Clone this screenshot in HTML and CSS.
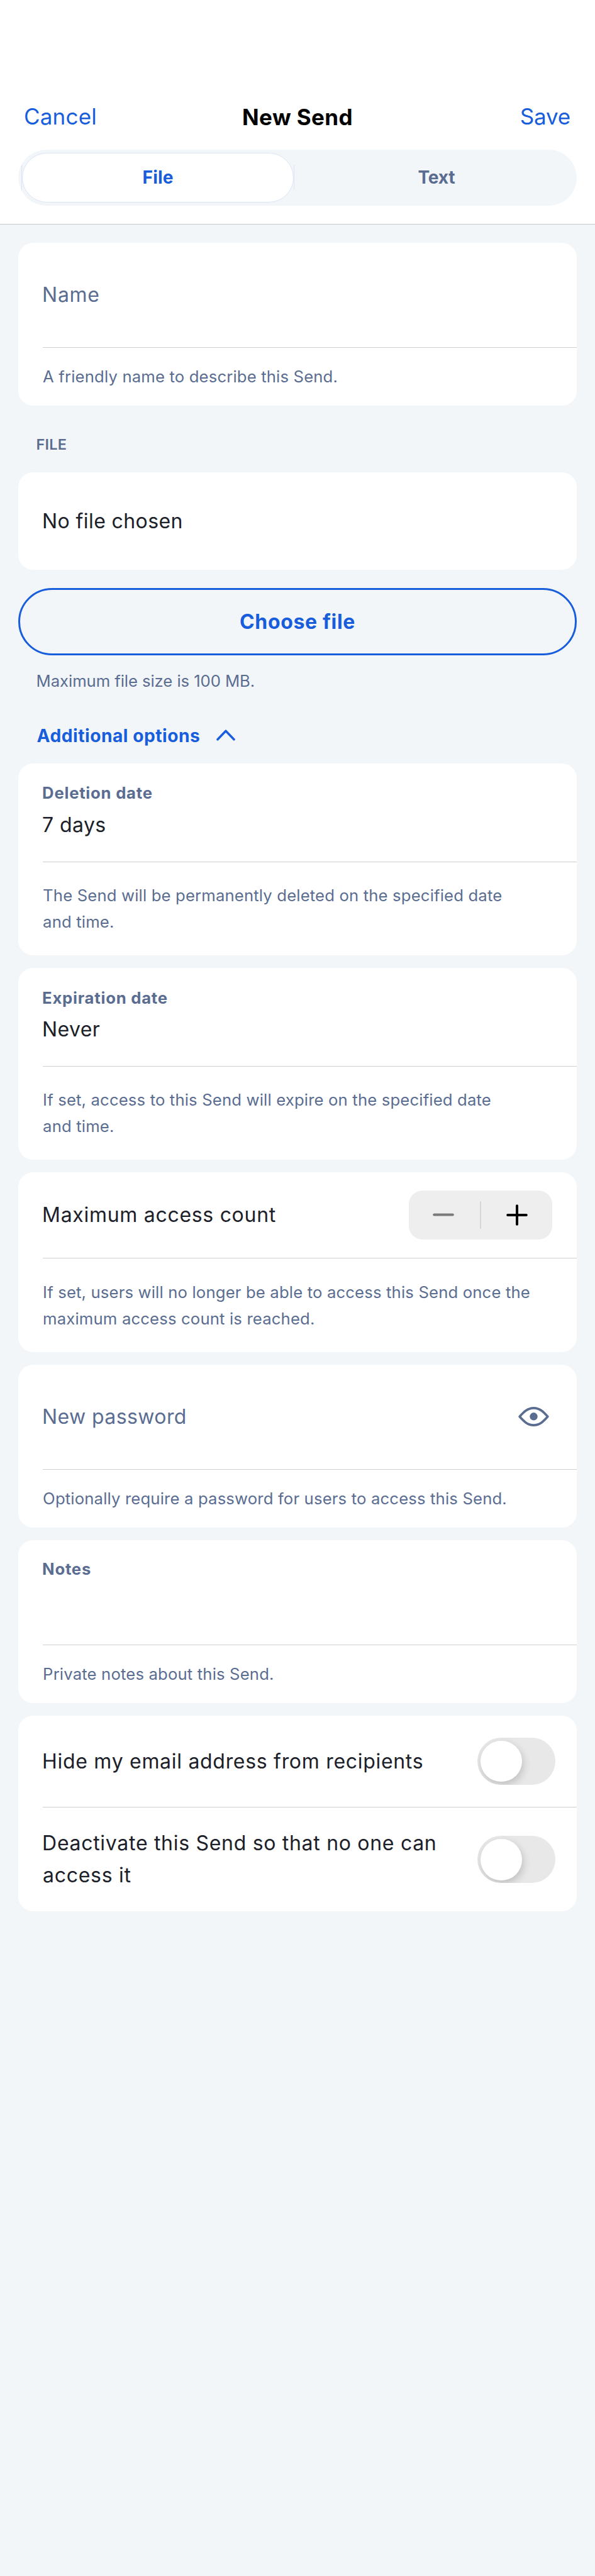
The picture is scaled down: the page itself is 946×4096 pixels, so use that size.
FILE: index.html
```html
<!DOCTYPE html>
<html lang="en">
<head>
<meta charset="utf-8">
<title>New Send</title>
<link rel="stylesheet" href="styles.css">
</head>
<body>
<header class="header">
  <nav class="bar">
    <a class="action">Cancel</a>
    <h1 class="title">New Send</h1>
    <a class="action save">Save</a>
  </nav>
  <div class="segmented">
    <div class="tab selected">File</div>
    <div class="tab">Text</div>
  </div>
</header>
<main class="form">
  <section class="card">
    <div class="field tall"><p class="body muted">Name</p></div>
    <p class="hint">A friendly name to describe this Send.</p>
  </section>
  <h2 class="section">FILE</h2>
  <section class="card file"><p class="body snug">No file chosen</p></section>
  <button class="choose">Choose file</button>
  <p class="note">Maximum file size is 100 MB.</p>
  <div class="toggle-options">
    <span>Additional options</span>
    <svg class="chevron" width="30" height="18" viewBox="0 0 30 18"><path d="M2 15.800 15 2.200 28 15.800"/></svg>
  </div>
  <section class="card">
    <div class="field labeled"><p class="label">Deletion date</p><p class="body snug">7 days</p></div>
    <p class="hint double">The Send will be permanently deleted on the specified date<br>and time.</p>
  </section>
  <section class="card">
    <div class="field labeled"><p class="label">Expiration date</p><p class="body snug">Never</p></div>
    <p class="hint double">If set, access to this Send will expire on the specified date<br>and time.</p>
  </section>
  <section class="card">
    <div class="field count">
      <p class="body">Maximum access count</p>
      <div class="stepper">
        <svg width="34" height="34" viewBox="0 0 34 34"><path class="minus" d="M2.200 16.600H31.800"/></svg>
        <i class="separator"></i>
        <svg width="34" height="34" viewBox="0 0 34 34"><path class="plus" d="M2.200 17H31.800M17 2.200V31.800"/></svg>
      </div>
    </div>
    <p class="hint double">If set, users will no longer be able to access this Send once the<br>maximum access count is reached.</p>
  </section>
  <section class="card">
    <div class="field tall password">
      <p class="body muted snug">New password</p>
      <svg class="eye" width="49" height="31" viewBox="0 0 49 31"><path d="M2.200 15.500C8.500 8.500 14.500 1.900 24.500 1.900S40.500 8.500 46.800 15.500C40.500 22.500 34.500 29.100 24.500 29.100S8.500 22.500 2.200 15.500Z"/><circle cx="24.500" cy="15.300" r="6.200"/></svg>
    </div>
    <p class="hint">Optionally require a password for users to access this Send.</p>
  </section>
  <section class="card">
    <div class="field tall notes"><p class="label">Notes</p></div>
    <p class="hint">Private notes about this Send.</p>
  </section>
  <section class="card">
    <div class="field switch-row"><p class="body">Hide my email address from recipients</p><div class="switch"><i class="knob"></i></div></div>
    <div class="switch-row last"><p class="body two">Deactivate this Send so that no one can<br>access it</p><div class="switch"><i class="knob"></i></div></div>
  </section>
</main>
</body>
</html>
```
FILE: styles.css
```css
* { box-sizing: border-box; margin: 0; padding: 0; }
body { background: #f3f6f9; color: #1b2029; font-family: Inter, "Liberation Sans", sans-serif; min-height: 4096px; }
.header { height: 356.5px; padding-top: 162.5px; background: #fff; border-bottom: 1px solid #c3c9cd; }
.bar { display: grid; grid-template-columns: 1fr auto 1fr; height: 44px; padding: 0 38px; line-height: 44px; font-size: 35px; }
.action { color: #175ddc; letter-spacing: .2px; }
.save { text-align: right; letter-spacing: -.2px; padding-right: 1px; }
.title { padding-top: 1px; color: #000; font-size: 35px; font-weight: 700; letter-spacing: .4px; }
.segmented { display: flex; height: 89px; margin: 31.2px 29.1px 0; padding: 4.9px 0 4.9px 6.3px; border-radius: 44.5px; background: #f3f6f9; }
.tab { display: flex; flex: 1; align-items: center; justify-content: center; padding-left: 4px; color: #5a6d91; font-size: 28.2px; font-weight: 700; letter-spacing: -.3px; }
.selected { position: relative; flex: 0 0 431.5px; padding: 0; border: 1.6px solid #dbe5f6; border-radius: 39.6px; background: #fff; color: #175ddc; letter-spacing: .15px; }
.selected::before, .selected::after { content: ""; position: absolute; top: 18px; width: 1px; height: 40px; background: #dbe5f6; }
.selected::before { left: -2px; }
.selected::after { right: -2px; }
.form { padding: 29.2px 29.1px 0; }
.card { overflow: hidden; margin-bottom: 19.5px; border-radius: 24px; background: #fff; }
.field { margin-left: 39px; border-bottom: 1px solid #d0d0d2; }
.body { font-size: 32px; line-height: 40px; letter-spacing: .7px; text-indent: -1px; }
.muted { color: #5a6d91; }
.snug { letter-spacing: .4px; }
.tall { height: 167.3px; padding-top: 63.3px; }
.hint { height: 92.3px; padding: 25px 0 0 39px; color: #5a6d91; font-size: 25.7px; line-height: 42px; letter-spacing: .15px; }
.double { height: 148.7px; padding-top: 32.7px; }
.label { color: #5a6d91; font-size: 25.7px; font-weight: 700; line-height: 32px; letter-spacing: .75px; text-indent: -1px; }
.section { margin: 47.1px 0 28.3px 29.5px; color: #5a6d91; font-size: 23.5px; font-weight: 600; line-height: 30px; letter-spacing: .16px; text-indent: -1px; }
.file { height: 155.1px; margin-bottom: 28.8px; padding: 58.3px 0 0 39px; }
.choose { display: block; width: 100%; height: 107.1px; border: 3.6px solid #175ddc; border-radius: 53.5px; background: none; color: #175ddc; font: 700 32px Inter, "Liberation Sans", sans-serif; letter-spacing: .65px; }
.note { margin: 20.8px 0 47.3px 29.5px; color: #5a6d91; font-size: 25.7px; line-height: 42px; letter-spacing: -.08px; text-indent: -1px; }
.toggle-options { display: flex; align-items: center; gap: 26px; height: 36px; margin: 0 0 25.8px 29.5px; color: #175ddc; font-size: 28.2px; font-weight: 700; line-height: 36px; letter-spacing: .5px; }
.chevron { margin-bottom: 2px; fill: none; stroke: #175ddc; stroke-width: 3.5; stroke-linecap: round; stroke-linejoin: round; }
.labeled { height: 157px; padding-top: 31.9px; }
.labeled .body { margin-top: 14.4px; }
.count { display: flex; align-items: center; justify-content: space-between; height: 137.5px; padding-right: 39px; }
.stepper { display: flex; align-items: center; justify-content: space-between; width: 228px; height: 77.6px; padding: 0 38.5px; border-radius: 22px; background: #eee; }
.stepper path { fill: none; stroke-width: 4; stroke-linecap: round; }
.minus { stroke: #7a7a7a; }
.plus { stroke: #000; }
.separator { width: 2.5px; height: 43.5px; border-radius: 1px; background: #d6d6d6; }
.password { display: flex; align-items: center; justify-content: space-between; padding: 0 43.5px 0 0; }
.eye path { fill: none; stroke: #5a6d91; stroke-width: 3.7; stroke-linejoin: round; }
.eye circle { fill: #5a6d91; }
.notes { padding-top: 30.6px; }
.switch-row { display: flex; align-items: center; justify-content: space-between; height: 146.6px; padding-right: 34px; }
.last { height: 164.7px; margin-left: 39px; }
.two { line-height: 50.8px; }
.switch { overflow: hidden; width: 123.7px; height: 75.2px; padding: 4.8px; border-radius: 37.6px; background: #e8e8e8; }
.knob { display: block; width: 65.6px; height: 65.6px; border-radius: 50%; background: #fff; box-shadow: 2px 5px 13px rgba(0, 0, 0, .18); }
```
